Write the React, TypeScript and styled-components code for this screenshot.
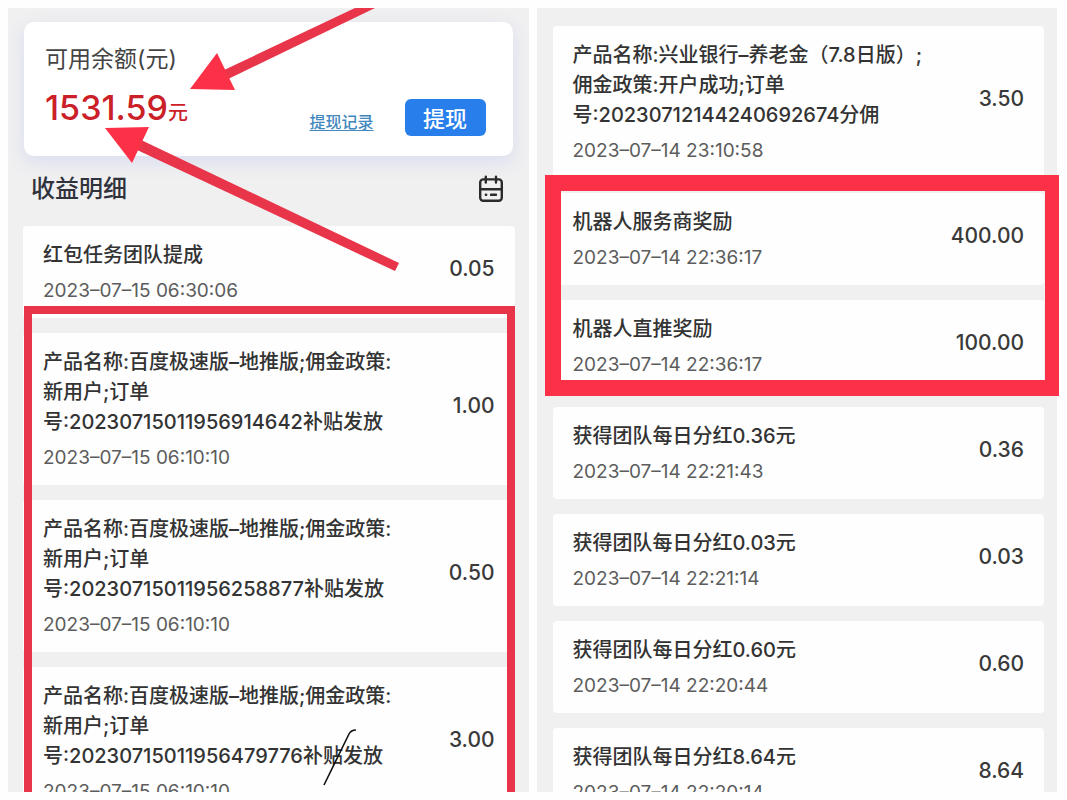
import React from "react";
import styled, { createGlobalStyle } from "styled-components";

const GlobalStyle = createGlobalStyle`
  * { box-sizing: border-box; }
  body {
    margin: 0;
    background: #fefefe;
    color: #333;
    font-family: Inter, "Noto Sans CJK SC", sans-serif;
  }
`;

const Page = styled.main`
  display: grid;
  grid-template-columns: 1fr 1fr;
  gap: 8px;
  height: calc(100vh - 16px);
  margin: 8px 0;
  padding: 0 10px 0 8px;
  overflow: hidden;
`;

const Panel = styled.section<{ $pad: string }>`
  position: relative;
  min-width: 0;
  padding: ${(p) => p.$pad};
  background: #f0f0f1;
`;

const BalanceCard = styled.div`
  display: flex;
  justify-content: space-between;
  align-items: flex-end;
  height: 134px;
  margin: 0 2px 0 1px;
  padding: 20px 27px 20px 21px;
  border-radius: 10px;
  background: #fff;
  box-shadow: 0 6px 18px rgba(190, 200, 240, 0.45);
`;

const BalanceBlock = styled.div`
  align-self: flex-start;
`;

const BalanceLabel = styled.div`
  font-size: 23px;
  line-height: 34px;
  color: #444;
`;

const Balance = styled.div`
  margin-top: 8px;
  font-size: 34px;
  line-height: 48px;
  font-weight: 500;
  color: #cb2027;
  white-space: nowrap;
`;

const Unit = styled.span`
  font-size: 20px;
`;

const Actions = styled.div`
  display: flex;
  align-items: center;
  gap: 31px;
`;

const RecordLink = styled.a`
  font-size: 16px;
  line-height: 24px;
  font-weight: 500;
  color: #4188bd;
  text-decoration: underline;
  text-underline-offset: 2px;
  margin-top: 8px;
`;

const WithdrawButton = styled.button`
  width: 81px;
  height: 37px;
  padding: 3px 0 0;
  border: 0;
  border-radius: 6px;
  background: #287fec;
  color: #fff;
  font: inherit;
  font-size: 22px;
  line-height: 34px;
  font-weight: 500;
`;

const SectionHeader = styled.header`
  display: flex;
  justify-content: space-between;
  align-items: center;
  height: 70px;
  padding: 0 11px 4px 8px;
`;

const SectionTitle = styled.h2`
  margin: 0;
  font-size: 24px;
  line-height: 36px;
  font-weight: 500;
  color: #30323c;
`;

const IconButton = styled.button`
  display: flex;
  padding: 0;
  border: 0;
  background: none;
  color: #2b2b2b;
`;

const List = styled.div`
  display: grid;
  gap: 15px;
`;

const Group = styled.div`
  position: relative;
  display: grid;
  gap: 15px;
`;

const Marker = styled.div<{ $inset: string; $border: string }>`
  position: absolute;
  inset: ${(p) => p.$inset};
  border: solid #e93549;
  border-width: ${(p) => p.$border};
  pointer-events: none;
`;

const BoldMarker = styled(Marker)`
  border-color: #fc3147;
`;

const Card = styled.article`
  display: flex;
  justify-content: space-between;
  align-items: center;
  padding: 14px 20px;
  border-radius: 4px;
  background: #fefefe;
`;

const CardTitle = styled.h3`
  margin: 0 0 8px;
  font-size: 20px;
  line-height: 30px;
  font-weight: 500;
  white-space: pre;
`;

const CardTime = styled.time`
  display: block;
  font-size: 19px;
  line-height: 26px;
  color: #5c5c5c;
`;

const Amount = styled.div`
  padding-bottom: 7px;
  font-size: 21px;
  line-height: 30px;
  font-weight: 500;
  color: #3a3a3a;
`;

const Drawing = styled.svg`
  position: absolute;
  top: 0;
  left: 0;
  overflow: visible;
  pointer-events: none;
`;

type Entry = { title: string; time: string; amount: string };

const product = (order: string) =>
  `产品名称:百度极速版–地推版;佣金政策:\n新用户;订单\n号:${order}补贴发放`;

const teamEntry: Entry = { title: "红包任务团队提成", time: "2023–07–15 06:30:06", amount: "0.05" };

const subsidies: Entry[] = [
  { title: product("20230715011956914642"), time: "2023–07–15 06:10:10", amount: "1.00" },
  { title: product("20230715011956258877"), time: "2023–07–15 06:10:10", amount: "0.50" },
  { title: product("20230715011956479776"), time: "2023–07–15 06:10:10", amount: "3.00" },
];

const bankEntry: Entry = {
  title: "产品名称:兴业银行–养老金（7.8日版）;\n佣金政策:开户成功;订单\n号:20230712144240692674分佣",
  time: "2023–07–14 23:10:58",
  amount: "3.50",
};

const rewards: Entry[] = [
  { title: "机器人服务商奖励", time: "2023–07–14 22:36:17", amount: "400.00" },
  { title: "机器人直推奖励", time: "2023–07–14 22:36:17", amount: "100.00" },
];

const dividends: Entry[] = [
  { title: "获得团队每日分红0.36元", time: "2023–07–14 22:21:43", amount: "0.36" },
  { title: "获得团队每日分红0.03元", time: "2023–07–14 22:21:14", amount: "0.03" },
  { title: "获得团队每日分红0.60元", time: "2023–07–14 22:20:44", amount: "0.60" },
  { title: "获得团队每日分红8.64元", time: "2023–07–14 22:20:14", amount: "8.64" },
];

function EntryCard({ entry }: { entry: Entry }) {
  return (
    <Card>
      <div>
        <CardTitle>{entry.title}</CardTitle>
        <CardTime>{entry.time}</CardTime>
      </div>
      <Amount>{entry.amount}</Amount>
    </Card>
  );
}

function CalendarIcon() {
  return (
    <svg width="26" height="28" viewBox="0 0 26 28" fill="none" stroke="currentColor" strokeWidth="2.4" strokeLinecap="round">
      <rect x="2.2" y="4.4" width="21.6" height="21.4" rx="3" />
      <path d="M2.5 14.2h21M7.8 1.6v6M18 1.6v6M13 19.8h5M7.8 19.8h.4" />
    </svg>
  );
}

export default function App() {
  return (
    <>
      <GlobalStyle />
      <Page>
        <Panel $pad="14px 14px 0 15px">
          <BalanceCard>
            <BalanceBlock>
              <BalanceLabel>可用余额(元)</BalanceLabel>
              <Balance>
                1531.59<Unit>元</Unit>
              </Balance>
            </BalanceBlock>
            <Actions>
              <RecordLink href="#records">提现记录</RecordLink>
              <WithdrawButton type="button">提现</WithdrawButton>
            </Actions>
          </BalanceCard>
          <SectionHeader>
            <SectionTitle>收益明细</SectionTitle>
            <IconButton type="button" aria-label="选择日期">
              <CalendarIcon />
            </IconButton>
          </SectionHeader>
          <List>
            <EntryCard entry={teamEntry} />
            <Group>
              {subsidies.map((e) => (
                <EntryCard key={e.title} entry={e} />
              ))}
              <Marker $inset="-27px 0 0 1px" $border="8px 8px 0 8px" />
            </Group>
          </List>
          <Drawing width="400" height="784" viewBox="8 8 400 784" aria-hidden="true">
            <g fill="#e93549">
              <path d="M222 71 355 8H375L226 80Z" />
              <path d="M139 139 399 263 395 271 135 149Z" />
            </g>
            <g fill="#fc3147">
              <path d="M190 89 217 53 235 90Z" />
              <path d="M105 128 149 127 132 163Z" />
            </g>
            <path d="M356 730Q351 730 349 734L324 785" fill="none" stroke="#111" strokeWidth="1.6" />
          </Drawing>
        </Panel>
        <Panel $pad="18px 13px 0 16px">
          <List>
            <EntryCard entry={bankEntry} />
            <Group>
              {rewards.map((e) => (
                <EntryCard key={e.title} entry={e} />
              ))}
              <BoldMarker $inset="-18px -15px -4px -8px" $border="16px 14px 16px 16px" />
            </Group>
            {dividends.map((e) => (
              <EntryCard key={e.title} entry={e} />
            ))}
          </List>
        </Panel>
      </Page>
    </>
  );
}
